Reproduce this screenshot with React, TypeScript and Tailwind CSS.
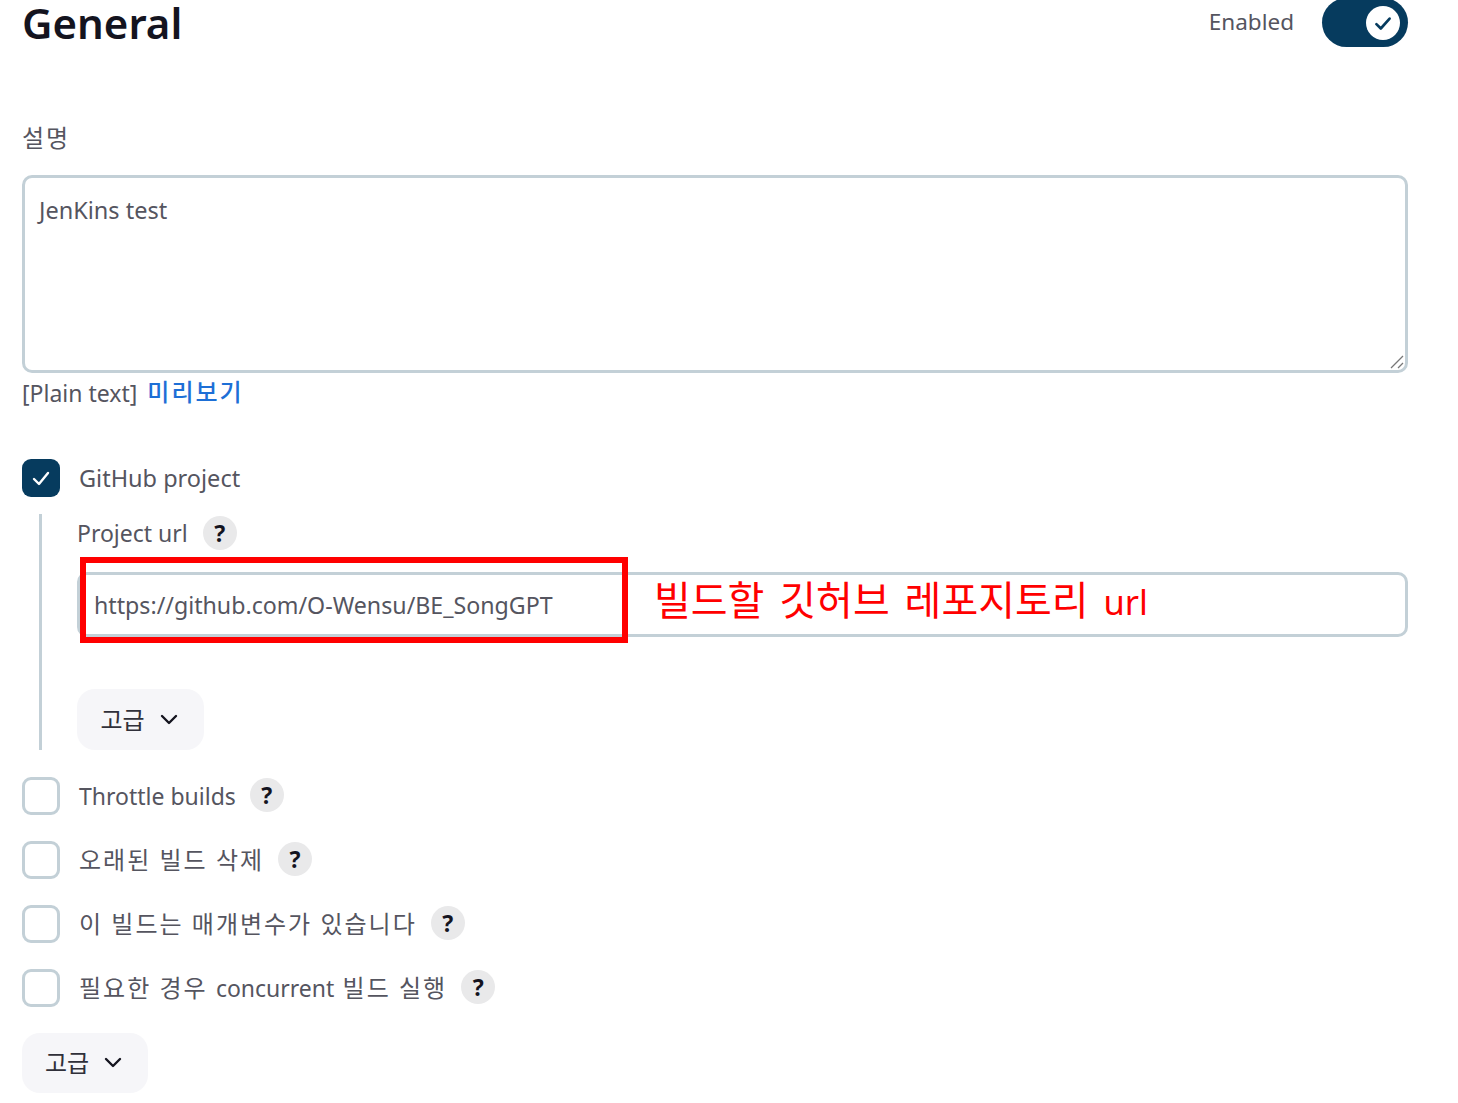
import React from "react";

const font = "[font-family:'Noto_Sans','Noto_Sans_CJK_KR',sans-serif]";
const ko = "text-[24px] tracking-[2px]";

function Help() {
  return (
    <span className="flex h-[34px] w-[34px] shrink-0 items-center justify-center rounded-full bg-[#e9e9ea] text-[23px] font-bold leading-none text-[#14141f]">
      ?
    </span>
  );
}

function Check({ checked = false }: { checked?: boolean }) {
  if (checked) {
    return (
      <span className="flex h-[38px] w-[38px] shrink-0 items-center justify-center rounded-[9px] bg-[#063b5e]">
        <svg width="20" height="20" viewBox="0 0 20 20" fill="none" stroke="white" strokeWidth="2.4" strokeLinecap="round" strokeLinejoin="round">
          <path d="M3 11 L8 16 L17 5" />
        </svg>
      </span>
    );
  }
  return <span className="h-[38px] w-[38px] shrink-0 rounded-[9px] border-[3px] border-[#c3d0d7] bg-white" />;
}

function Row({ children }: { children: React.ReactNode }) {
  return (
    <div className="flex h-[38px] items-center">
      <Check />
      <span className="ml-[19px] flex items-center gap-[14px] text-[23px] leading-none text-[#55555f]">
        <span className="whitespace-pre">{children}</span>
        <span className="-mt-[2px]">
          <Help />
        </span>
      </span>
    </div>
  );
}

function Advanced({ width, height }: { width: string; height: string }) {
  return (
    <button className={`flex ${height} ${width} items-center justify-center gap-[14px] rounded-[18px] bg-[#f6f6f9] pr-[2px] text-[24px] leading-none text-[#30303a]`}>
      고급
      <svg width="20" height="20" viewBox="0 0 20 20" fill="none" stroke="#14141f" strokeWidth="2.4" strokeLinecap="round" strokeLinejoin="round">
        <path d="M3 6 L10 13 L17 6" />
      </svg>
    </button>
  );
}

export default function App() {
  return (
    <div className={`relative h-[1103px] w-[1458px] overflow-hidden bg-white pl-[22px] pr-[50px] ${font}`}>
      <header className="-mt-[2px] flex h-[49px] items-start justify-between">
        <h1 className="mt-[2px] text-[42px] font-semibold leading-[46px] text-[#14141f]">General</h1>
        <div className="flex items-center gap-[28px]">
          <span className="text-[22.5px] leading-none text-[#55555f]">Enabled</span>
          <span className="flex h-[49px] w-[86px] items-center justify-end rounded-full bg-[#063b5e] pr-[8px]">
            <span className="flex h-[34px] w-[34px] items-center justify-center rounded-full bg-white">
              <svg width="22" height="22" viewBox="0 0 20 20" fill="none" stroke="#063b5e" strokeWidth="2.4" strokeLinecap="round" strokeLinejoin="round">
                <path d="M4 11 L8 15 L16 6" />
              </svg>
            </span>
          </span>
        </div>
      </header>

      <div className="mt-[74px] text-[24px] leading-[34px] tracking-[2px] text-[#55555f]">설명</div>
      <div className="relative mt-[20px]">
        <textarea
          readOnly
          defaultValue="JenKins test"
          className="block h-[198px] w-full resize-none rounded-[10px] border-[3px] border-[#c3d0d7] bg-white px-[14px] py-[15px] text-[23.5px] leading-[34px] text-[#55555f] outline-none"
        />
        <svg className="absolute bottom-[4px] right-[4px]" width="14" height="14" viewBox="0 0 14 14" fill="none" stroke="#777" strokeWidth="1.3">
          <path d="M1 13 L13 1 M8 13 L13 8" />
        </svg>
      </div>
      <div className="mt-[2px] flex h-[36px] items-center gap-[10px] text-[23px] leading-none text-[#55555f]">
        [Plain text]
        <a className="-mt-[2px] text-[24px] font-medium tracking-[2px] text-[#1d6fd6]">미리보기</a>
      </div>

      <div className="mt-[48px] flex h-[38px] items-center">
        <Check checked />
        <span className="ml-[19px] mt-[2px] text-[23.5px] leading-none text-[#55555f]">GitHub project</span>
      </div>

      <section className="relative ml-[17px] mt-[17px] h-[236px] border-l-[3px] border-[#c3d0d7] pl-[35px] pt-[2px]">
        <div className="flex h-[34px] items-center gap-[15px] text-[23px] leading-none text-[#55555f]">
          Project url
          <Help />
        </div>
        <input
          readOnly
          value="https://github.com/O-Wensu/BE_SongGPT"
          className="mt-[22px] block h-[65px] w-full rounded-[10px] border-[3px] border-[#c3d0d7] bg-white px-[14px] text-[23.2px] text-[#55555f] outline-none"
        />
        <div className="mt-[52px]">
          <Advanced width="w-[127px]" height="h-[61px]" />
        </div>
        <div className="pointer-events-none absolute left-[38px] top-[43px] h-[86px] w-[548px] border-[6px] border-[#ff0000]" />
        <div className="pointer-events-none absolute left-[612px] top-[61px] whitespace-nowrap text-[40px] leading-[50px] text-[#ff0000] [word-spacing:4.5px]">
          빌드할 깃허브 레포지토리 <span className="text-[34.5px]">url</span>
        </div>
      </section>

      <div className="mt-[27px] flex flex-col gap-[26px]">
        <Row>Throttle builds</Row>
        <Row><span className={ko}>오래된 빌드 삭제</span></Row>
        <Row><span className={ko}>이 빌드는 매개변수가 있습니다</span></Row>
        <Row><span className={ko}>필요한 경우 </span>concurrent<span className={ko}> 빌드 실행</span></Row>
      </div>
      <div className="mt-[26px]">
        <Advanced width="w-[126px]" height="h-[60px]" />
      </div>
    </div>
  );
}
